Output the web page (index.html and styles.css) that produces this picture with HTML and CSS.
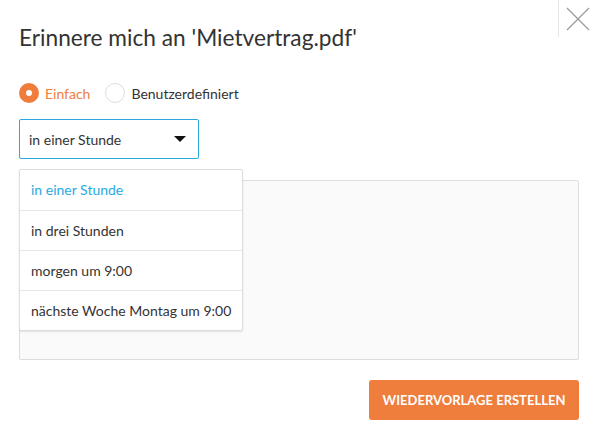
FILE: index.html
```html
<!DOCTYPE html>
<html>
<head>
	<title>Erinnerung</title>
	<meta name="viewport" content="width=device-width, initial-scale=1" />
	<link rel="stylesheet" href="styles.css">
</head>
<body>
	<div class="modal">
		<div class="close">
			<svg width="24" height="24" viewBox="0 0 24 24"><path d="M1 1L23 23M23 1L1 23" stroke="#9a9a9a" stroke-width="1.2" fill="none"/></svg>
		</div>
		<h1 class="title">Erinnere mich an 'Mietvertrag.pdf'</h1>
		<div class="radios">
			<label class="radio radio-on"><span class="dot"></span>Einfach</label>
			<label class="radio"><span class="dot"></span>Benutzerdefiniert</label>
		</div>
		<div class="select">
			<span>in einer Stunde</span>
			<span class="arrow"></span>
		</div>
		<div class="area-wrap">
			<div class="textarea"></div>
			<ul class="menu">
				<li class="active">in einer Stunde</li>
				<li>in drei Stunden</li>
				<li>morgen um 9:00</li>
				<li>nächste Woche Montag um 9:00</li>
			</ul>
		</div>
		<div class="footer">
			<button class="button">Wiedervorlage erstellen</button>
		</div>
	</div>
</body>
</html>
```

FILE: styles.css
```css
body {
	margin: 0;
	font-family: Lato, "Open Sans", sans-serif;
	color: #333333;
	background: #ffffff;
}

.modal {
	position: relative;
	padding: 24px 18px 18px 19px;
}

.close {
	position: absolute;
	top: 0;
	right: 0;
	width: 38px;
	height: 37px;
	border-left: 1px solid #e6e6e6;
	display: flex;
	justify-content: center;
	align-items: center;
}

.title {
	margin: 0;
	font-size: 22.7px;
	font-weight: 400;
	line-height: 28px;
	color: #333333;
}

.radios {
	display: flex;
	gap: 15px;
	margin-top: 31px;
}

.radio {
	display: flex;
	align-items: center;
	font-size: 14px;
	color: #333333;
}

.dot {
	width: 18px;
	height: 18px;
	border: 1px solid #dddddd;
	border-radius: 50%;
	margin-right: 6px;
	box-sizing: content-box;
}

.radio-on {
	color: #ef7d3c;
}

.radio-on .dot {
	width: 6px;
	height: 6px;
	border: 7px solid #ef7d3c;
}

.select {
	margin-top: 16px;
	width: 180px;
	height: 40px;
	box-sizing: border-box;
	border: 1px solid #29a9e0;
	border-radius: 2px;
	padding: 0 12px 0 9px;
	display: flex;
	align-items: center;
	justify-content: space-between;
	font-size: 14px;
}

.arrow {
	width: 0;
	height: 0;
	border-left: 6px solid transparent;
	border-right: 6px solid transparent;
	border-top: 6px solid #111111;
}

.area-wrap {
	position: relative;
	margin-top: 21px;
}

.textarea {
	height: 178px;
	background: #fafafa;
	border: 1px solid #dddddd;
	border-radius: 2px;
}

.menu {
	position: absolute;
	top: -11px;
	left: 0;
	width: 222px;
	margin: 0;
	padding: 0;
	list-style: none;
	background: #ffffff;
	border: 1px solid #dddddd;
	border-radius: 2px;
	box-shadow: 0 1px 2px rgba(0, 0, 0, 0.1);
}

.menu li {
	height: 40px;
	line-height: 40px;
	padding-left: 11px;
	font-size: 14px;
	border-top: 1px solid #e8e8e8;
	box-sizing: border-box;
}

.menu li:first-child {
	border-top: none;
}

.menu .active {
	color: #29a9e0;
}

.footer {
	display: flex;
	justify-content: flex-end;
	margin-top: 20px;
}

.button {
	background-color: #ef7d3c;
	color: #ffffff;
	font-family: Lato, sans-serif;
	font-weight: 700;
	font-size: 13px;
	text-transform: uppercase;
	width: 210px;
	height: 40px;
	border: none;
	border-radius: 3px;
}
```
